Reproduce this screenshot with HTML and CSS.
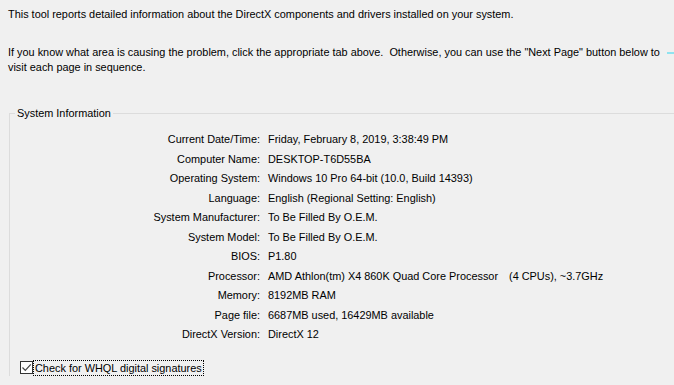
FILE: index.html
```html
<html>
<head>
    <meta charset="utf-8">
    <title>DirectX Diagnostic Tool</title>
    <link rel="stylesheet" href="styles.css">
</head>
<body>
	<div class="intro">
		<p>This tool reports detailed information about the DirectX components and drivers installed on your system.</p>
		<p class="hint">If you know what area is causing the problem, click the appropriate tab above.&nbsp; Otherwise, you can use the "Next Page" button below to visit each page in sequence.</p>
	</div>
	<fieldset class="sysbox">
		<legend>System Information</legend>
		<div class="info">
			<span class="lbl">Current Date/Time:</span><span class="val">Friday, February 8, 2019, 3:38:49 PM</span>
			<span class="lbl">Computer Name:</span><span class="val">DESKTOP-T6D55BA</span>
			<span class="lbl">Operating System:</span><span class="val">Windows 10 Pro 64-bit (10.0, Build 14393)</span>
			<span class="lbl">Language:</span><span class="val">English (Regional Setting: English)</span>
			<span class="lbl">System Manufacturer:</span><span class="val">To Be Filled By O.E.M.</span>
			<span class="lbl">System Model:</span><span class="val">To Be Filled By O.E.M.</span>
			<span class="lbl">BIOS:</span><span class="val">P1.80</span>
			<span class="lbl">Processor:</span><span class="val"><span class="cpu">AMD Athlon(tm) X4 860K Quad Core Processor</span>(4 CPUs), ~3.7GHz</span>
			<span class="lbl">Memory:</span><span class="val">8192MB RAM</span>
			<span class="lbl">Page file:</span><span class="val">6687MB used, 16429MB available</span>
			<span class="lbl">DirectX Version:</span><span class="val">DirectX 12</span>
		</div>
		<label class="whql">
			<span class="box"><svg width="11" height="11" viewBox="0 0 11 11"><path d="M1.5 5.5 L4.3 8.3 L9.8 2.3" fill="none" stroke="#444" stroke-width="1.2"/></svg></span>
			<span class="focus">Check for WHQL digital signatures</span>
		</label>
	</fieldset>
</body>
</html>
```

FILE: styles.css
```css
body { margin: 0; background: #f0f0f0; color: #000; font-family: "Liberation Sans", Arial, sans-serif; font-size: 10.9px; position: relative; overflow: hidden; }
.intro { padding: 7px 0 0 8px; width: 664px; }
.intro p { margin: 0; line-height: 15px; }
.intro .hint { margin-top: 23px; }
.intro .hint::after { content: ""; position: absolute; left: 667px; top: 52px; width: 7px; height: 2px; background: #8fe3f0; }
.sysbox { margin: 31px 0 0 9px; padding: 0; border: solid 1px #dcdcdc; border-right: none; border-bottom: none; }
.sysbox legend { margin-left: 5px; padding: 0 2px; line-height: 14px; }
.info { display: grid; grid-template-columns: 250px auto; column-gap: 8px; padding-top: 10px; }
.info .lbl { text-align: right; line-height: 19.5px; }
.info .val { line-height: 19.5px; white-space: nowrap; }
.info .cpu { display: inline-block; width: 241px; }
.whql { display: flex; align-items: center; margin: 15px 0 0 10px; height: 16px; }
.whql .box { width: 11px; height: 11px; border: solid 1px #333; background: #fff; display: flex; }
.whql .focus { outline: 1px dotted #000; margin-left: 1px; padding: 0 1px; line-height: 14px; }
```
